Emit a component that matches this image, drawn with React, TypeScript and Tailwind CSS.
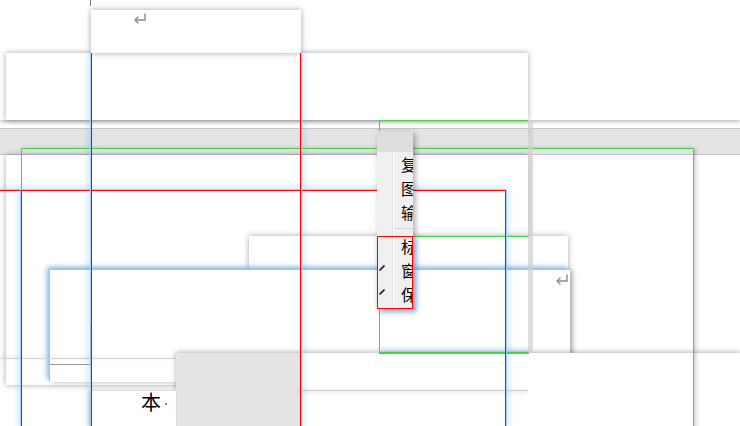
import React from "react";

// Overlapping window frames, like a desktop caught mid-redraw.
// Each window sits at its own spot on the canvas, so windows are placed absolutely;
// their insides (menu rows, bottom strip) use flow.

const glowL = "shadow-[-1px_0_1px_rgba(150,200,245,1),-3px_0_4px_rgba(100,170,240,0.85)]";
const glowR = "shadow-[1px_0_1px_rgba(150,200,245,1),3px_0_4px_rgba(100,170,240,0.85)]";
const glowT = "shadow-[0_-1px_1px_rgba(150,200,245,1),0_-3px_4px_rgba(100,170,240,0.85)]";
const winShadow = "shadow-[0_0_6px_rgba(0,0,0,0.35)]";

function ReturnMark({ className }: { className: string }) {
  return (
    <svg className={className} width="14" height="11" viewBox="0 0 14 11" fill="none">
      <path d="M12 0.5 V7 H2" stroke="#8c8c8c" strokeWidth="1.4" />
      <path d="M5.5 3.5 L2 7 L5.5 10.5" stroke="#8c8c8c" strokeWidth="1.4" />
    </svg>
  );
}

function Tick() {
  return (
    <svg className="mb-[5px] ml-[2px]" width="6" height="6" viewBox="0 0 6 6" fill="none">
      <path d="M0.5 5.5 L5.5 0.5" stroke="#222" strokeWidth="1.6" />
    </svg>
  );
}

type MenuItem = { label: string; checked?: boolean } | "sep";

const MENU: MenuItem[] = [
  { label: "复制" },
  { label: "图片" },
  { label: "输出" },
  "sep",
  { label: "标签" },
  { label: "窗口", checked: true },
  { label: "保存", checked: true },
];

function ContextMenu() {
  return (
    <div className="absolute left-[377px] top-[131px] flex h-[177px] w-[36px] flex-col overflow-hidden bg-[#f0f0f0] shadow-[2px_2px_6px_rgba(0,0,0,0.35)]">
      <div className="h-[21px] shrink-0 bg-[#dedede]" />
      {MENU.map((item, i) =>
        item === "sep" ? (
          <div key={i} className="flex h-[10px] shrink-0">
            <div className="w-[16px] shrink-0 border-r border-[#e2e2e2]" />
            <div className="min-w-0 flex-1 border-l border-white">
              <div className="mt-[4px] h-px bg-[#d6d6d6]" />
            </div>
          </div>
        ) : (
          <div key={i} className="flex h-[24px] shrink-0">
            <div className="flex w-[16px] shrink-0 items-center border-r border-[#e2e2e2]">
              {item.checked && <Tick />}
            </div>
            <div className="min-w-0 flex-1 whitespace-nowrap border-l border-white pl-[7px] text-[16px] leading-[24px] text-black">
              {item.label}
            </div>
          </div>
        ),
      )}
      <div className="flex flex-1">
        <div className="w-[16px] shrink-0 border-r border-[#e2e2e2]" />
        <div className="min-w-0 flex-1 border-l border-white" />
      </div>
    </div>
  );
}

export default function App() {
  return (
    <div className="relative h-[426px] w-[740px] overflow-hidden bg-white font-['Noto_Sans_CJK_SC','Noto_Sans',sans-serif]">
      {/* full-width frame ending above the band */}
      <div className="absolute left-0 top-[-30px] h-[150px] w-[740px] bg-white shadow-[0_1px_5px_rgba(0,0,0,0.35)]" />

      {/* toolbar band */}
      <div className="absolute left-0 top-[128px] h-[27px] w-[740px] border-y border-[#c4c4c4] bg-[#e4e4e4]" />

      {/* wide window under the top tab */}
      <div className={`absolute left-[6px] top-[53px] h-[67px] w-[522px] bg-white ${winShadow}`} />

      {/* small top tab */}
      <div className="absolute left-[90px] top-0 h-[6px] w-px bg-[#777]" />
      <div className={`absolute left-[91px] top-[10px] h-[43px] w-[210px] bg-white ${winShadow}`}>
        <ReturnMark className="ml-[42px] mt-[3px]" />
      </div>

      {/* main body window */}
      <div className={`absolute left-[6px] top-[155px] h-[230px] w-[522px] bg-white ${winShadow}`} />

      {/* inner dialog */}
      <div className={`absolute left-[249px] top-[236px] h-[117px] w-[319px] bg-white ${winShadow}`} />

      {/* focused frame */}
      <div className="absolute left-[50px] top-[270px] flex h-[112px] w-[520px] justify-end bg-white shadow-[-1px_-1px_1px_rgba(150,200,245,1),-3px_-3px_5px_rgba(100,170,240,0.8),3px_0_5px_rgba(0,0,0,0.25)]">
        <ReturnMark className="mr-[1px] mt-[4px]" />
      </div>
      <div className="absolute left-[50px] top-[364px] h-px w-[41px] bg-[#999]" />
      <div className="absolute left-[90px] top-[323px] h-[41px] w-px bg-[#999]" />

      {/* left frame bottom line */}
      <div className="absolute left-0 top-[358px] h-px w-[177px] bg-[#d6d6d6] shadow-[0_-1px_4px_rgba(0,0,0,0.2)]" />

      {/* bottom strip window */}
      <div className="absolute left-[176px] top-[353px] flex h-[73px] w-[564px] bg-white shadow-[0_-1px_5px_rgba(0,0,0,0.3)]">
        <div className="h-full w-[124px] bg-[#e4e4e4]" />
        <div className="h-full w-px bg-[#d4d4d4]" />
      </div>
      <div className="absolute left-[300px] top-[390px] h-px w-[228px] bg-[#d0d0d0] shadow-[0_1px_4px_rgba(0,0,0,0.3)]" />

      {/* page under the bottom strip */}
      <div className="absolute left-[91px] top-[391px] flex h-[40px] w-[85px] items-start gap-[4px] bg-white pl-[50px] shadow-[-2px_0_4px_rgba(0,0,0,0.25)]">
        <span className="mt-[-1px] text-[20px] leading-[24px] text-black">本</span>
        <span className="mt-[12px] h-[2px] w-[2px] rounded-full bg-[#555]" />
      </div>

      {/* green outlines */}
      <div className="absolute left-[21px] top-[148px] h-[290px] w-[673px] border border-[#46d246] shadow-[2px_0_4px_rgba(0,0,0,0.2)]" />
      <div className="absolute left-[379px] top-[120px] h-[234px] w-[150px] border-y border-l border-[#46d246]" />
      <div className="absolute left-[379px] top-[236px] h-px w-[150px] bg-[#46d246]" />
      <div className={`absolute left-[379px] top-[352px] h-px w-[150px] bg-[#46d246] ${glowT}`} />
      <div className="absolute left-[528px] top-[120px] h-[233px] w-[5px] bg-[#cfcfcf]/70" />

      {/* red guides */}
      <div className={`absolute left-0 top-[190px] h-px w-[506px] bg-[#ff0000] ${glowT}`} />
      <div className={`absolute left-[21px] top-[190px] h-[236px] w-px bg-[#ff0000] ${glowL}`} />
      <div className={`absolute left-[91px] top-[53px] h-[373px] w-px bg-[#ff0000] ${glowL}`} />
      <div className={`absolute left-[300px] top-[53px] h-[373px] w-px bg-[#ff0000] ${glowR}`} />
      <div className={`absolute left-[505px] top-[190px] h-[236px] w-px bg-[#ff0000] ${glowR}`} />

      {/* context menu, clipped by its own edge */}
      <ContextMenu />
      <div className="absolute left-[377px] top-[236px] h-[73px] w-[36px] border border-[#ff0000] shadow-[3px_3px_5px_rgba(110,175,240,0.7)]" />
    </div>
  );
}
